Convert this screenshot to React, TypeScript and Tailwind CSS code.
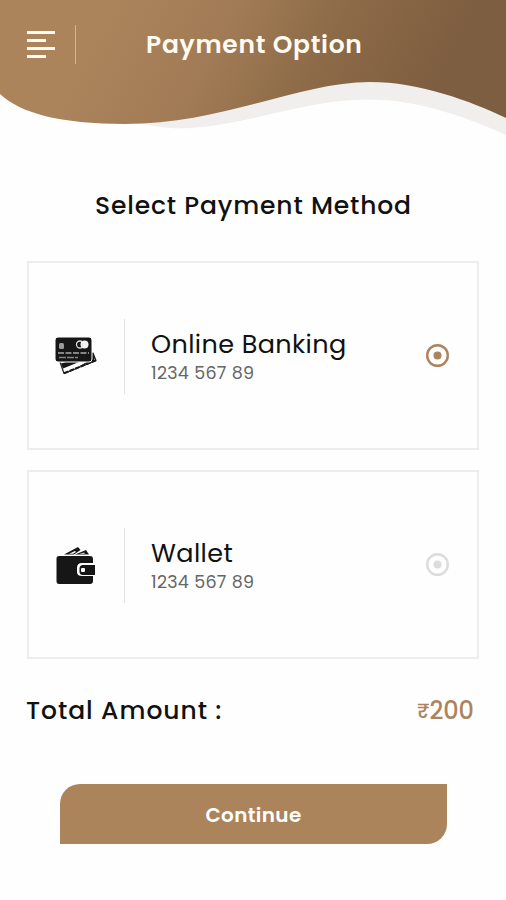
import { useState } from 'react';
import type { ReactNode } from 'react';

interface PaymentMethod {
  id: string;
  title: string;
  account: string;
  icon: ReactNode;
}

const methods: PaymentMethod[] = [
  { id: 'banking', title: 'Online Banking', account: '1234 567 89', icon: <CardsIcon /> },
  { id: 'wallet', title: 'Wallet', account: '1234 567 89', icon: <WalletIcon /> },
];

export default function App() {
  const [selected, setSelected] = useState('banking');

  return (
    <div className="flex h-[900px] w-[506px] flex-col overflow-hidden bg-[#fefefe] font-['Poppins','Inter',sans-serif] text-[#111111]">
      <Header />

      <main className="flex flex-col px-[27px] pt-[50px]">
        <h2 className="pl-[68px] text-[25px] font-medium leading-10 tracking-[0.85px] whitespace-nowrap">
          Select Payment Method
        </h2>

        <div className="mt-[35px] flex flex-col gap-5">
          {methods.map((method) => (
            <MethodCard
              key={method.id}
              method={method}
              active={selected === method.id}
              onSelect={() => setSelected(method.id)}
            />
          ))}
        </div>

        {/* Total */}
        <div className="mt-8 flex items-center justify-between pr-[5px] leading-10 whitespace-nowrap">
          <span className="-ml-px text-[25px] font-medium tracking-[0.95px]">Total Amount :</span>
          <span className="flex items-center text-[24px] font-medium text-[#ac845c]">
            <span className="text-xl">₹</span>200
          </span>
        </div>

        <button className="mt-[53px] ml-[33px] h-[60px] w-[387px] rounded-tl-[20px] rounded-br-[20px] bg-[#ac845c] pt-0.5 text-xl font-semibold tracking-[0.35px] text-white">
          Continue
        </button>
      </main>
    </div>
  );
}

function Header() {
  return (
    <header className="relative h-[136px] shrink-0">
      {/* Wave background */}
      <svg className="absolute inset-0" width="506" height="136" viewBox="0 0 506 136">
        <defs>
          <linearGradient id="wave" gradientUnits="userSpaceOnUse" x1="110" y1="0" x2="400" y2="150">
            <stop offset="0" stopColor="#ac845c" />
            <stop offset="0.35" stopColor="#a17b55" />
            <stop offset="0.65" stopColor="#8d6b48" />
            <stop offset="1" stopColor="#7e5e40" />
          </linearGradient>
        </defs>
        <path
          d="M100 100C130 124 160 130 190 128C253 124 305 99.500 368 99.500C420 99.500 468 118 506 135V80H100Z"
          fill="#f1efed"
        />
        <path
          d="M0 0H506V118C470 101 420 82 370 82C300 82 222 124 125 124C60 124 20 113 0 94Z"
          fill="url(#wave)"
        />
      </svg>

      <div className="relative flex h-[88px] items-center pl-[27px] text-[#fffaf2]">
        <button className="flex w-7 flex-col gap-[5px]" aria-label="Menu">
          <span className="h-[3px] w-7 bg-current" />
          <span className="h-[3px] w-[19px] bg-current" />
          <span className="h-[3px] w-7 bg-current" />
          <span className="h-[3px] w-[19px] bg-current" />
        </button>
        <span className="ml-5 h-[39px] w-px bg-[#d0b596]" />
        <h1 className="ml-[70px] pt-0.5 text-[25px] font-semibold tracking-[0.7px] whitespace-nowrap">Payment Option</h1>
      </div>
    </header>
  );
}

interface MethodCardProps {
  method: PaymentMethod;
  active: boolean;
  onSelect: () => void;
}

function MethodCard({ method, active, onSelect }: MethodCardProps) {
  return (
    <button
      onClick={onSelect}
      className="flex h-[189px] w-[452px] items-center border-2 border-[#ededed] bg-[#fefefe] pr-[27px] text-left"
    >
      <span className="flex w-[95px] shrink-0 pl-[26px]">{method.icon}</span>
      <span className="mt-0.5 h-[75px] w-px bg-[#e2e2e2]" />
      <span className="ml-[26px] flex flex-1 flex-col pt-0.5 whitespace-nowrap">
        <span className="text-[25.5px] leading-8 tracking-[0.4px] text-[#111111]">{method.title}</span>
        <span className="text-[17.5px] leading-[26px] tracking-[0.3px] text-[#666666]">{method.account}</span>
      </span>
      <Radio active={active} />
    </button>
  );
}

function Radio({ active }: { active: boolean }) {
  return (
    <svg
      className={active ? 'text-[#ac845c]' : 'text-[#dcdcdc]'}
      width="25"
      height="25"
      viewBox="0 0 25 25"
    >
      <circle cx="12.500" cy="12.500" r="10.300" fill="none" stroke="currentColor" strokeWidth="2.400" />
      <circle cx="12.500" cy="12.500" r="4" fill="currentColor" />
    </svg>
  );
}

function CardsIcon() {
  return (
    <svg width="44" height="40" viewBox="0 0 44 40">
      {/* Back card */}
      <path d="M5 26L9 37.500L41 24.500L38 17Z" fill="#fff" stroke="#222" strokeWidth="1.200" strokeLinejoin="round" />
      <path d="M6 27.500L8 32.500L24 26H38L40 22L38 17Z" fill="#161616" />
      <path d="M23 31L39 24.500L38.300 22L30 27Z" fill="#161616" />
      <path d="M9 37.300L41 24.300" stroke="#161616" strokeWidth="2" strokeDasharray="5 1" />
      {/* Front card */}
      <rect x="0" y="1" width="37" height="25" rx="3" fill="#161616" stroke="#fff" strokeWidth="1" />
      <rect x="4" y="7" width="5" height="6" rx="1.500" fill="#999" />
      <circle cx="25" cy="8.500" r="3.500" fill="none" stroke="#ddd" strokeWidth="1.300" />
      <circle cx="29.500" cy="8.500" r="4" fill="#f2f2f2" />
      <path d="M3 17H34" stroke="#858585" strokeWidth="2" strokeDasharray="6 1.500" />
      <path d="M4 21.500H23" stroke="#858585" strokeWidth="1.500" strokeDasharray="7 1" />
    </svg>
  );
}

function WalletIcon() {
  return (
    <svg width="42" height="40" viewBox="0 0 42 40">
      {/* Notes */}
      <path d="M9 9.500L23 2L25.500 5L19 9.500Z" fill="#161616" />
      <path d="M14 8.800L20 6L21 7L18 8.800Z" fill="#fff" />
      <path d="M20 9.500L31 5L34 9.500Z" fill="#161616" />
      <path d="M24 9L29 7.500L30 9Z" fill="#bbb" />
      {/* Body */}
      <path
        d="M4 11H35Q38 11 38 14V18H27Q22 18 22 23V27Q22 31 27 31H38V36Q38 39 35 39H4Q1.500 39 1.500 36V13.500Q1.500 11 4 11Z"
        fill="#161616"
      />
      {/* Clasp */}
      <path d="M28 20H40V30H28Q24.500 30 24.500 26.500V23.500Q24.500 20 28 20Z" fill="#161616" />
      <rect x="26" y="23" width="4" height="4" rx="1" fill="#fff" />
    </svg>
  );
}
